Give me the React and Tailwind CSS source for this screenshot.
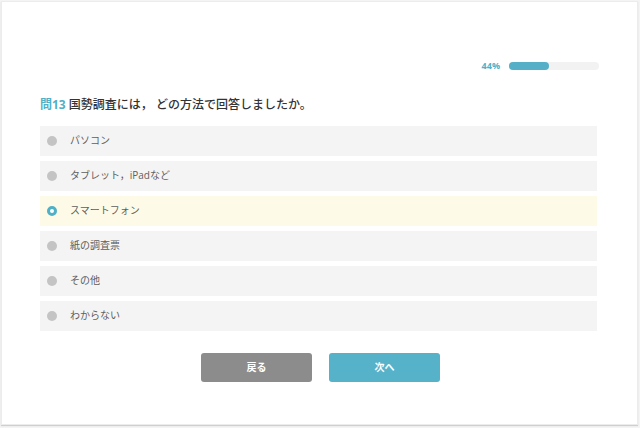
import React from 'react';

const options = ['パソコン', 'タブレット，iPadなど', 'スマートフォン', '紙の調査票', 'その他', 'わからない'];

const App = () => {
  const selected = 2;
  return (
    <div
      className="w-[640px] h-[428px] bg-[#f4f4f4] pl-[1px] pt-[1px] pr-[2px] pb-[3px]"
      style={{ fontFamily: '"Open Sans", "Noto Sans CJK JP", sans-serif' }}
    >
      <div className="h-full bg-white border border-[#ececec] shadow-[0_1px_1px_rgba(0,0,0,0.15)] pl-[38px] pr-[40px] pt-[57px]">
        <div className="flex items-center justify-end gap-[9px] -mr-[2px]">
          <span className="text-[9px] font-bold text-[#4fb0c6]">44%</span>
          <div className="w-[90px] h-[8px] rounded-full bg-[#f2f2f2]">
            <div className="h-full w-[44%] rounded-full bg-[#54afc7]" />
          </div>
        </div>

        <h1 className="mt-[24px] text-[12px] font-medium text-[#333] leading-[16px]">
          <span className="text-[#4fb0c6] font-bold">問13</span> 国勢調査には， どの方法で回答しましたか。
        </h1>

        <ul className="mt-[13px] flex flex-col gap-[5px]">
          {options.map((label, i) => (
            <li
              key={label}
              className={
                i === selected
                  ? 'h-[30px] flex items-center pl-[7px] bg-[#fdfbe8]'
                  : 'h-[30px] flex items-center pl-[7px] bg-[#f4f4f4]'
              }
            >
              {i === selected ? (
                <span className="w-[10px] h-[10px] rounded-full border-[3px] border-[#4fb0c6] bg-white" />
              ) : (
                <span className="w-[10px] h-[10px] rounded-full bg-[#c4c4c4]" />
              )}
              <span className="ml-[13px] text-[10px] text-[#5e5e5e]">{label}</span>
            </li>
          ))}
        </ul>

        <div className="mt-[22px] flex justify-center gap-[17px] pl-[4px]">
          <button className="w-[111px] h-[29px] rounded-[3px] bg-[#8c8c8c] text-white text-[10px] font-semibold">
            戻る
          </button>
          <button className="w-[111px] h-[29px] rounded-[3px] bg-[#56b2c9] text-white text-[10px] font-semibold">
            次へ
          </button>
        </div>
      </div>
    </div>
  );
};

export default App;
